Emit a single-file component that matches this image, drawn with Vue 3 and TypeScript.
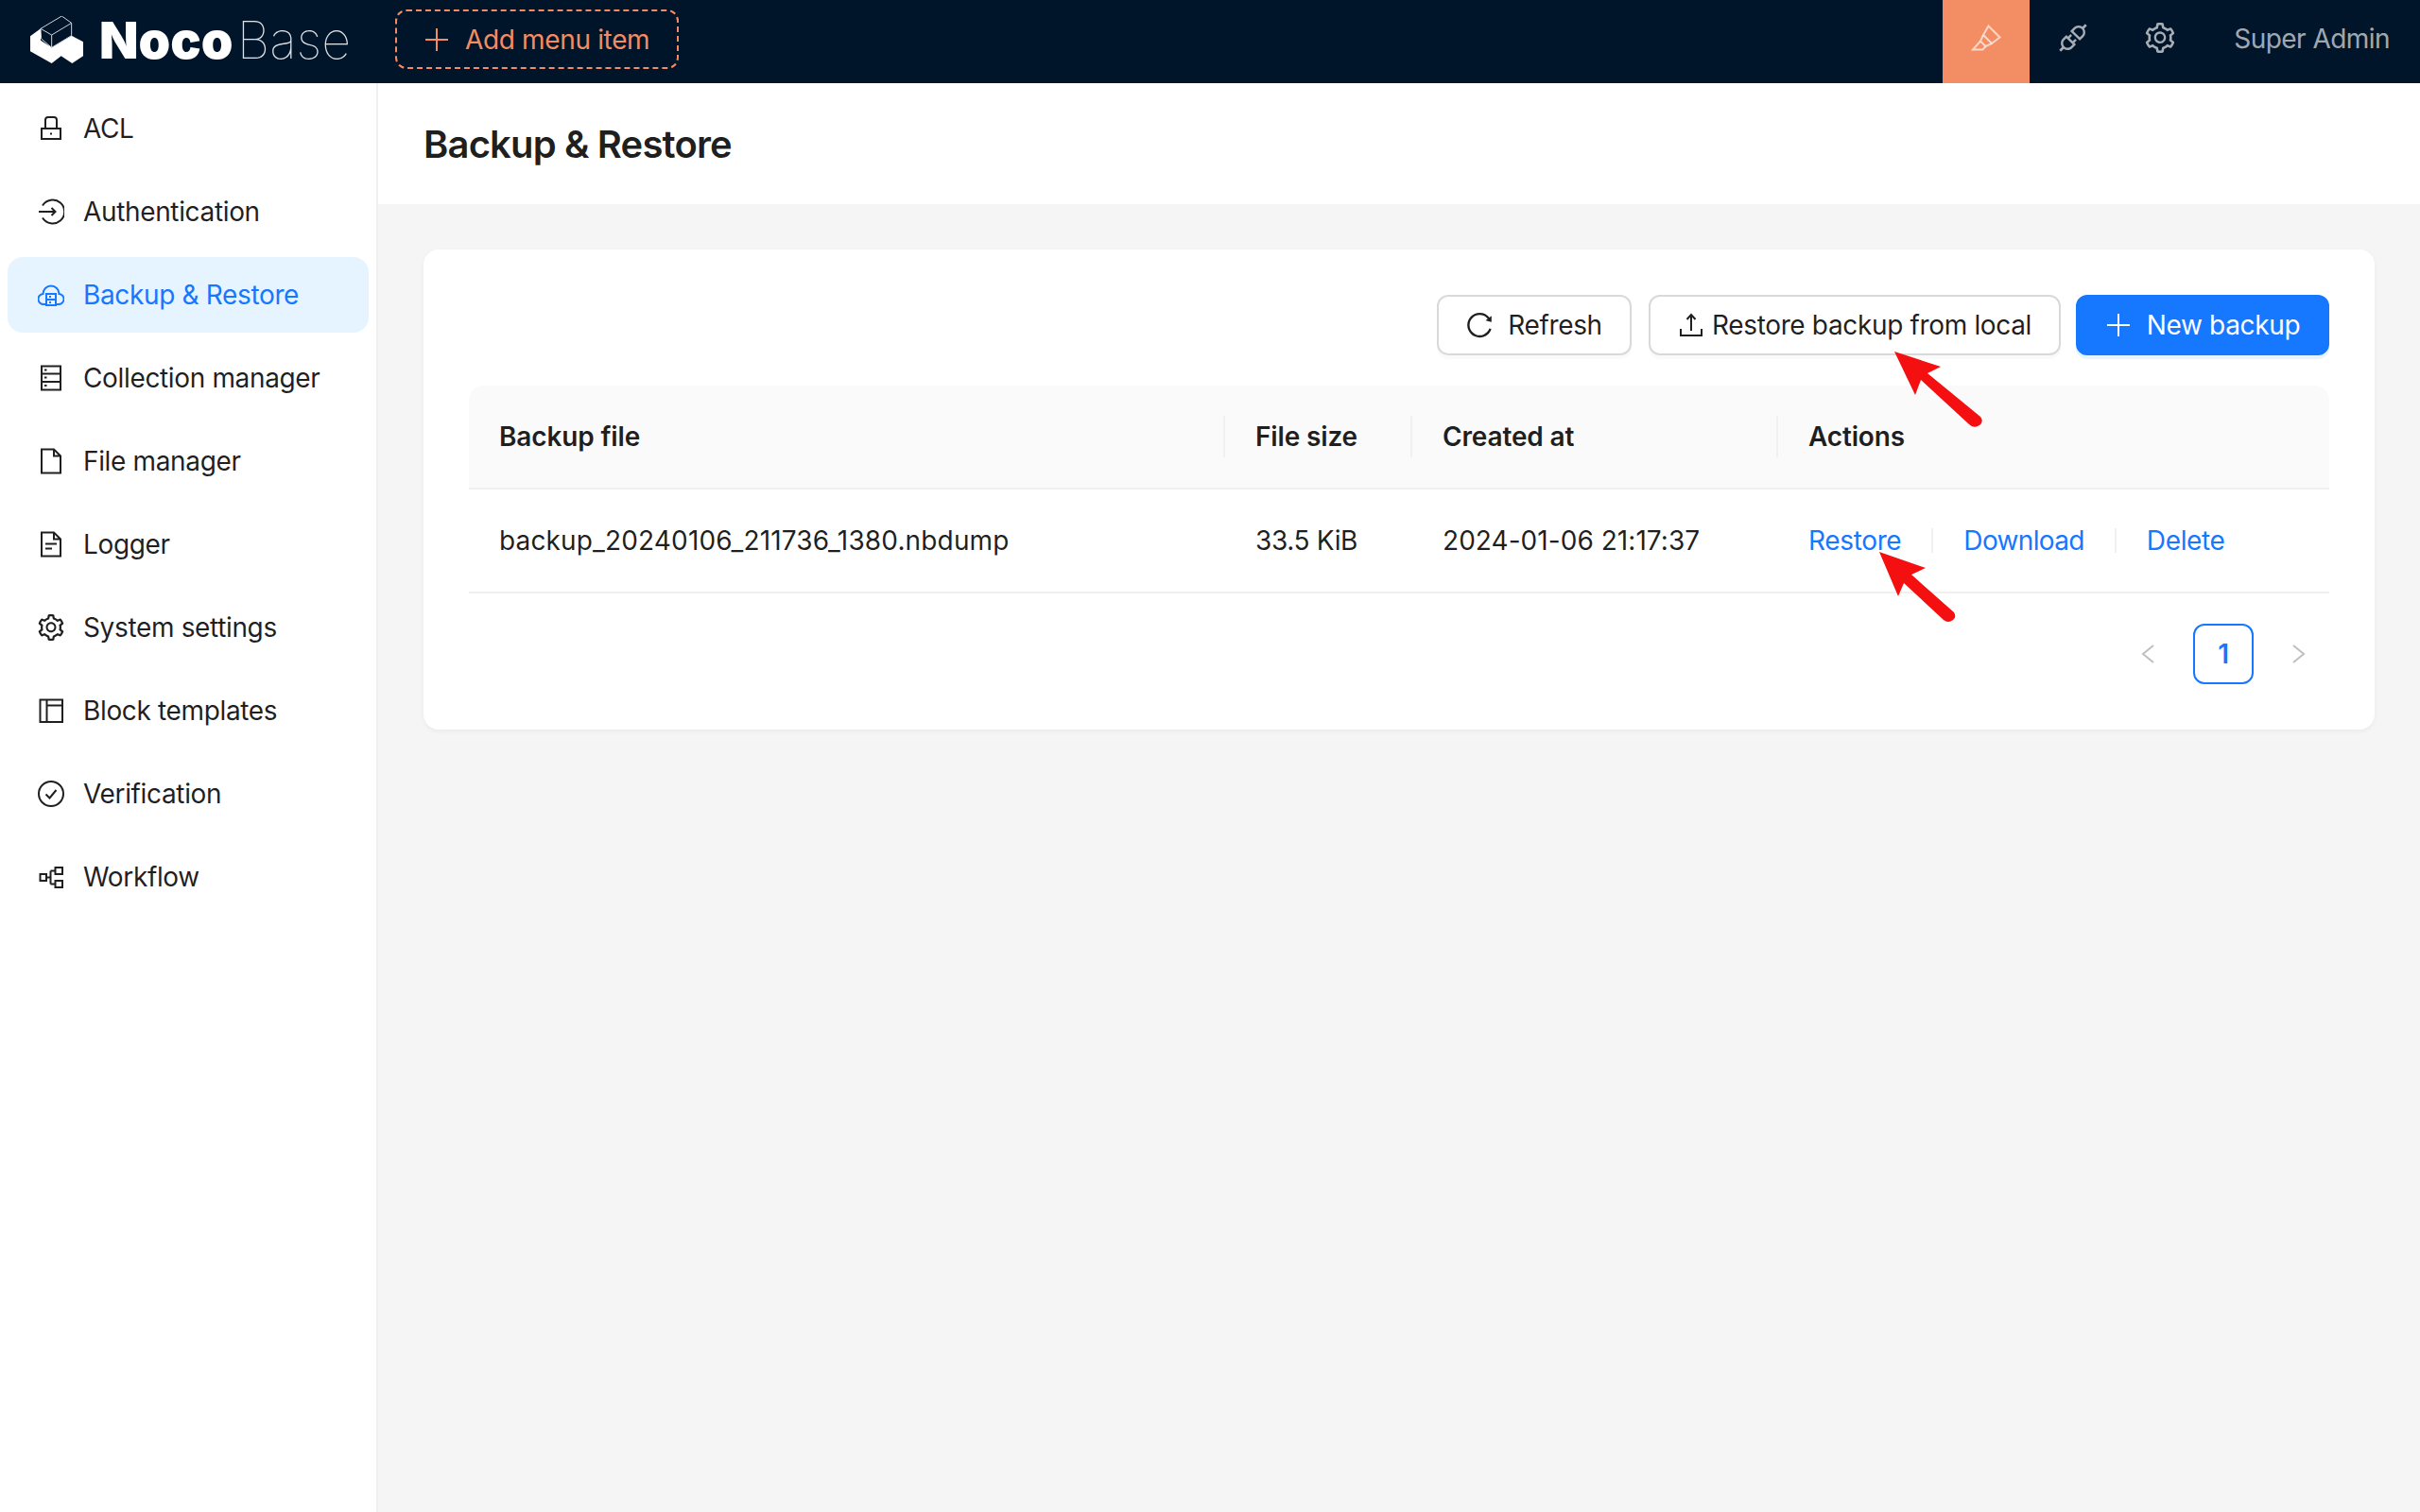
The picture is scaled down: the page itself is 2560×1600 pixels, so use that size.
<template>
  <div class="page">
    <header class="topbar">
      <div class="logo">
        <svg class="logo_mark" viewBox="37 28 168 150" width="56" height="50">
          <path d="M37 92L70 68V105L105 128L168 90L205 110V155L170 178L135 155L105 178L37 140Z" fill="#fff" />
          <path d="M70 68L137 28L168 50V90L105 128L72 100ZM70 68L105 88L168 50M105 88V128" fill="none" stroke="#cfd4da" stroke-width="3" />
        </svg>
        <span class="logo_noco">Noco</span><span class="logo_base">Base</span>
      </div>
      <button class="add_item">
        <svg class="icon" viewBox="0 0 28 28"><path d="M14 2V26M2 14H26" fill="none" stroke="currentColor" stroke-width="2" /></svg>
        <span>Add menu item</span>
      </button>
      <div class="topbar_right">
        <div class="top_icon active">
          <svg class="icon_lg" viewBox="0 0 32 32" fill="none" stroke="currentColor" stroke-width="2">
            <path d="M18.5 3.5L30.5 15.5L22 22L13 13Z" />
            <path d="M13 13L10 19.5L15.5 25L22 22" />
            <path d="M10 19.5L2 28.5H12.5L15.5 25" />
          </svg>
        </div>
        <div class="top_icon">
          <svg class="icon_lg" viewBox="64 64 896 896" fill="currentColor"><path :d="apiPath" /></svg>
        </div>
        <div class="top_icon">
          <svg class="icon_lg" viewBox="64 64 896 896" fill="currentColor"><path :d="gearPath" /></svg>
        </div>
        <div class="user">Super Admin</div>
      </div>
    </header>

    <div class="body">
      <aside class="sidebar">
        <div
          v-for="item in menuItems"
          :key="item.label"
          class="menu_item"
          :class="{ selected: item.label === activeLabel }"
        >
          <svg
            v-if="item.label === 'System settings'"
            class="icon"
            viewBox="64 64 896 896"
            fill="currentColor"
          >
            <path :d="gearPath" />
          </svg>
          <svg v-else class="icon" viewBox="0 0 28 28" fill="none" stroke="currentColor" stroke-width="2">
            <path :d="item.icon" />
          </svg>
          <span>{{ item.label }}</span>
        </div>
      </aside>

      <main class="main">
        <div class="page_head">
          <h1>Backup &amp; Restore</h1>
        </div>
        <div class="content">
          <section class="card">
            <div class="toolbar">
              <button class="btn btn_refresh">
                <svg class="icon" viewBox="64 64 896 896" fill="currentColor"><path :d="reloadPath" /></svg>
                <span>Refresh</span>
              </button>
              <button class="btn btn_upload">
                <svg class="icon" viewBox="0 0 28 28" fill="none" stroke="currentColor" stroke-width="2">
                  <path d="M14 3V20M9.5 8L14 3L18.5 8M3 18V25H25V18" />
                </svg>
                <span>Restore backup from local</span>
              </button>
              <button class="btn btn_primary">
                <svg class="icon" viewBox="0 0 28 28"><path d="M14 2V26M2 14H26" fill="none" stroke="currentColor" stroke-width="2" /></svg>
                <span>New backup</span>
              </button>
            </div>

            <table class="table">
              <colgroup>
                <col v-for="w in colWidths" :key="w" :style="{ width: w + 'px' }" />
              </colgroup>
              <thead>
                <tr>
                  <th>Backup file</th>
                  <th>File size</th>
                  <th>Created at</th>
                  <th>Actions</th>
                </tr>
              </thead>
              <tbody>
                <tr>
                  <td class="cell_name">backup_20240106_211736_1380.nbdump</td>
                  <td>33.5 KiB</td>
                  <td class="cell_date">2024-01-06 21:17:37</td>
                  <td>
                    <div class="actions">
                      <a>Restore</a>
                      <i></i>
                      <a class="tight">Download</a>
                      <i></i>
                      <a>Delete</a>
                    </div>
                  </td>
                </tr>
              </tbody>
            </table>

            <div class="pager">
              <div class="pager_item">
                <svg class="chev" viewBox="0 0 14 20"><path d="M13 1L2 10L13 19" /></svg>
              </div>
              <div class="pager_item current">1</div>
              <div class="pager_item">
                <svg class="chev" viewBox="0 0 14 20"><path d="M1 1L12 10L1 19" /></svg>
              </div>
            </div>
          </section>
        </div>
      </main>
    </div>

    <!-- annotation arrows drawn over the screenshot -->
    <svg class="arrows" viewBox="0 0 2560 1600" width="2560" height="1600">
      <path d="M2004 372L2053 388L2039 395L2095 441Q2099 446 2094 450Q2088 454 2083 449L2032 402L2026 418Z" fill="#f40f10" />
      <path d="M1988 584L2037 601L2022 608L2067 648Q2070 653 2066 656Q2061 660 2056 656L2014 617L2008 631Z" fill="#f40f10" />
    </svg>
  </div>
</template>

<script setup lang="ts">
interface MenuItem {
  label: string;
  icon: string;
}

const activeLabel = "Backup & Restore";
const colWidths = [800, 198, 387, 583];

const gearPath =
  "M924.8 625.7l-65.5-56c3.1-19 4.7-38.4 4.7-57.8s-1.6-38.8-4.7-57.8l65.5-56a32.03 32.03 0 009.3-35.2l-.9-2.6a443.74 443.74 0 00-79.7-137.9l-1.8-2.1a32.12 32.12 0 00-35.1-9.5l-81.3 28.9c-30-24.6-63.5-44-99.7-57.6l-15.7-85a32.05 32.05 0 00-25.8-25.7l-2.7-.5c-52.1-9.4-106.9-9.4-159 0l-2.7.5a32.05 32.05 0 00-25.8 25.7l-15.8 85.4a351.86 351.86 0 00-99 57.4l-81.9-29.1a32 32 0 00-35.1 9.5l-1.8 2.1a446.02 446.02 0 00-79.7 137.9l-.9 2.6c-4.5 12.5-.8 26.5 9.3 35.2l66.3 56.6c-3.1 18.8-4.6 38-4.6 57.1 0 19.2 1.5 38.4 4.6 57.1L99 625.5a32.03 32.03 0 00-9.3 35.2l.9 2.6c18.1 50.4 44.9 96.9 79.7 137.9l1.8 2.1a32.12 32.12 0 0035.1 9.5l81.9-29.1c29.8 24.5 63.1 43.9 99 57.4l15.8 85.4a32.05 32.05 0 0025.8 25.7l2.7.5a449.4 449.4 0 00159 0l2.7-.5a32.05 32.05 0 0025.8-25.7l15.7-85a350 350 0 0099.7-57.6l81.3 28.9a32 32 0 0035.1-9.5l1.8-2.1c34.8-41.1 61.6-87.5 79.7-137.9l.9-2.6c4.5-12.3.8-26.3-9.3-35zM788.3 465.9c2.5 15.1 3.8 30.6 3.8 46.1s-1.3 31-3.8 46.1l-6.6 40.1 74.7 63.9a370.03 370.03 0 01-42.6 73.6L721 702.8l-31.4 25.8c-23.9 19.6-50.5 35-79.3 45.8l-38.1 14.3-17.9 97a377.5 377.5 0 01-85 0l-17.9-97.2-37.8-14.5c-28.5-10.8-55-26.2-78.7-45.7l-31.4-25.9-93.4 33.2c-17-22.9-31.2-47.6-42.6-73.6l75.5-64.5-6.5-40c-2.4-14.9-3.7-30.3-3.7-45.5 0-15.3 1.2-30.6 3.7-45.5l6.5-40-75.5-64.5c11.3-26.1 25.6-50.7 42.6-73.6l93.4 33.2 31.4-25.9c23.7-19.5 50.2-34.9 78.7-45.7l37.9-14.3 17.9-97.2c28.1-3.2 56.8-3.2 85 0l17.9 97 38.1 14.3c28.7 10.8 55.4 26.2 79.3 45.8l31.4 25.8 92.8-32.9c17 22.9 31.2 47.6 42.6 73.6L781.8 426l6.5 39.9zM512 326c-97.2 0-176 78.8-176 176s78.8 176 176 176 176-78.8 176-176-78.8-176-176-176zm79.2 255.2A111.6 111.6 0 01512 614c-29.9 0-58-11.7-79.2-32.8A111.6 111.6 0 01400 502c0-29.9 11.7-58 32.8-79.2C454 401.6 482.1 390 512 390c29.9 0 58 11.6 79.2 32.8A111.6 111.6 0 01624 502c0 29.9-11.7 58-32.8 79.2z";

const apiPath =
  "M917.7 148.8l-42.4-42.4c-1.6-1.6-3.6-2.3-5.7-2.3s-4.1.8-5.7 2.3l-76.1 76.1a199.27 199.27 0 00-112.1-34.3c-51.2 0-102.4 19.5-141.5 58.6L432.3 308.7a8.03 8.03 0 000 11.3L704 591.7c1.6 1.6 3.6 2.3 5.7 2.3 2 0 4.1-.8 5.7-2.3l101.9-101.9c68.9-69 77-175.7 24.3-253.5l76.1-76.1c3.1-3.2 3.1-8.3 0-11.4zM769.1 441.7l-59.4 59.4-186.8-186.8 59.4-59.4c24.9-24.9 58.1-38.7 93.4-38.7 35.3 0 68.4 13.7 93.4 38.7 24.9 24.9 38.7 58.1 38.7 93.4 0 35.3-13.8 68.4-38.7 93.4zm-190.2 105a8.03 8.03 0 00-11.3 0L501 613.3 410.7 523l66.7-66.7c3.1-3.1 3.1-8.2 0-11.3L441 408.6a8.03 8.03 0 00-11.3 0L363 475.3l-43-43a7.85 7.85 0 00-5.7-2.3c-2 0-4.1.8-5.7 2.3L206.8 534.2c-68.9 69-77 175.7-24.3 253.5l-76.1 76.1a8.03 8.03 0 000 11.3l42.4 42.4c1.6 1.6 3.6 2.3 5.7 2.3s4.1-.8 5.7-2.3l76.1-76.1c33.7 22.9 72.9 34.3 112.1 34.3 51.2 0 102.4-19.5 141.5-58.6l101.9-101.9c3.1-3.1 3.1-8.2 0-11.3l-43-43 66.7-66.7c3.1-3.1 3.1-8.2 0-11.3l-36.6-36.2zM441.7 769.1a131.32 131.32 0 01-93.4 38.7c-35.3 0-68.4-13.7-93.4-38.7a131.32 131.32 0 01-38.7-93.4c0-35.3 13.7-68.4 38.7-93.4l59.4-59.4 186.8 186.8-59.4 59.4z";

const reloadPath =
  "M909.1 209.3l-56.4 44.1C775.8 155.1 656.2 92 521.9 92 290 92 102.3 279.5 102 511.5 101.7 743.7 289.8 932 521.9 932c181.3 0 335.8-115 394.6-276.1 1.5-4.2-.7-8.9-4.9-10.3l-56.7-19.5a8 8 0 00-10.1 4.8c-1.8 5-3.8 10-5.9 14.9-17.3 41-42.1 77.8-73.7 109.4A344.77 344.77 0 01655.9 829c-42.3 17.9-87.4 27-133.8 27-46.5 0-91.5-9.1-133.8-27A341.5 341.5 0 01279 755.2a342.16 342.16 0 01-73.7-109.4c-17.9-42.4-27-87.4-27-133.9s9.1-91.5 27-133.9c17.3-41 42.1-77.8 73.7-109.4 31.6-31.6 68.4-56.4 109.3-73.8 42.3-17.9 87.4-27 133.8-27 46.5 0 91.5 9.1 133.8 27a341.5 341.5 0 01109.3 73.8c9.9 9.9 19.2 20.4 27.8 31.4l-60.2 47a8 8 0 003 14.1l175.6 43c5 1.2 9.9-2.6 9.9-7.7l.8-180.9c-.1-6.6-7.8-10.3-13-6.2z";

const menuItems: MenuItem[] = [
  { label: "ACL", icon: "M4 14H24V25H4ZM8 14V5a3 3 0 0 1 3-3h6a3 3 0 0 1 3 3V14M14 18.5V20.5" },
  { label: "Authentication", icon: "M5 7.5A12.5 12.5 0 1 1 5 20.5M1 14H18.5M14.5 10L18.5 14L14.5 18" },
  { label: "Backup & Restore", icon: "M8 24H6.5A5.5 5.5 0 0 1 5.5 13A8.5 8.5 0 0 1 22.5 13A5.5 5.5 0 0 1 21.5 24H20M9 13H19V25H9ZM9 19H19M12 16H14M12 22H14" },
  { label: "Collection manager", icon: "M4 1.5H24V26.5H4ZM4 9.5H24M4 18H24M7 5.5H9.5M7 13.5H9.5M7 22H9.5" },
  { label: "File manager", icon: "M4 1.5H17L24 8.5V26.5H4ZM17 1.5V8.5H24" },
  { label: "Logger", icon: "M4 1.5H17L24 8.5V26.5H4ZM17 1.5V8.5H24M8 13.5H20M8 18.5H15" },
  { label: "System settings", icon: "" },
  { label: "Block templates", icon: "M2.5 2.5H26V26H2.5ZM9.5 2.5V26M9.5 8.5H26" },
  { label: "Verification", icon: "M27 14A13 13 0 1 1 1 14A13 13 0 1 1 27 14ZM8.5 14.5L12.5 18.5L19.5 10" },
  { label: "Workflow", icon: "M2.5 11H9V18H2.5ZM18.5 4H26V11H18.5ZM18.5 18H26V25H18.5ZM9 14.5H13.5M13.5 7.5V21.5M13.5 7.5H18.5M13.5 21.5H18.5" },
];
</script>

<style>
html,
body {
  margin: 0;
  background: #f5f5f5;
}
</style>

<style scoped>
* {
  box-sizing: border-box;
}

.page {
  position: relative;
  width: 2560px;
  height: 1600px;
  overflow: hidden;
  display: flex;
  flex-direction: column;
  font-family: Inter, "Noto Sans", sans-serif;
  font-size: 28px;
  letter-spacing: -0.35px;
  color: rgba(0, 0, 0, 0.88);
}

.topbar {
  height: 88px;
  flex: none;
  display: flex;
  align-items: center;
  background: #00152a;
}

.logo {
  width: 418px;
  height: 88px;
  display: flex;
  align-items: center;
  padding: 0 0 4px 32px;
  color: #fff;
  font-size: 54px;
  letter-spacing: 0;
}

.logo_mark {
  flex: none;
  margin-right: 17px;
}

.logo_noco {
  font-weight: 900;
  margin-right: 4px;
}

.logo_base {
  font-weight: 100;
  color: #dfe3e8;
}

.add_item {
  width: 300px;
  height: 63px;
  margin-bottom: 5px;
  display: flex;
  align-items: center;
  gap: 16px;
  padding: 0 28px;
  background: transparent;
  border: 2px dashed #f58c61;
  border-radius: 12px;
  color: #f58c61;
  font: inherit;
  letter-spacing: inherit;
  white-space: nowrap;
}

.icon {
  width: 28px;
  height: 28px;
  flex: none;
  display: block;
}

.icon_lg {
  width: 32px;
  height: 32px;
  display: block;
}

.topbar_right {
  margin-left: auto;
  display: flex;
  align-items: center;
  height: 88px;
  color: rgba(255, 255, 255, 0.65);
}

.top_icon {
  width: 92px;
  height: 88px;
  padding-bottom: 8px;
  display: flex;
  align-items: center;
  justify-content: center;
}

.top_icon.active {
  background: #f38d63;
}

.user {
  padding: 0 32px 7px;
  letter-spacing: -0.55px;
}

.body {
  flex: 1;
  display: flex;
  min-height: 0;
}

.sidebar {
  width: 400px;
  flex: none;
  background: #fff;
  border-right: 2px solid #f0f0f0;
  padding: 8px 8px 0;
}

.menu_item {
  height: 80px;
  margin-bottom: 8px;
  padding-left: 32px;
  border-radius: 16px;
  display: flex;
  align-items: center;
  gap: 20px;
  width: 382px;
}

.menu_item.selected {
  background: #e6f4ff;
  color: #1677ff;
}

.main {
  flex: 1;
  min-width: 0;
  display: flex;
  flex-direction: column;
}

.page_head {
  height: 128px;
  background: #fff;
  padding: 2px 0 0 48px;
  display: flex;
  align-items: center;
}

.page_head h1 {
  margin: 0;
  font-size: 40px;
  font-weight: 600;
  letter-spacing: -0.85px;
  line-height: 1;
}

.content {
  flex: 1;
  padding: 48px;
  background: #f5f5f5;
}

.card {
  background: #fff;
  border-radius: 16px;
  padding: 48px;
  box-shadow: 0 2px 4px rgba(0, 0, 0, 0.03), 0 2px 8px rgba(0, 0, 0, 0.02);
}

.toolbar {
  display: flex;
  justify-content: flex-end;
  gap: 16px;
  margin-bottom: 32px;
}

.btn {
  height: 64px;
  display: flex;
  align-items: center;
  justify-content: center;
  background: #fff;
  border: 2px solid #d9d9d9;
  border-radius: 12px;
  box-shadow: 0 4px 0 rgba(0, 0, 0, 0.02);
  font: inherit;
  letter-spacing: inherit;
  color: inherit;
}

.btn_refresh {
  width: 206px;
  margin-right: 2px;
  gap: 16px;
}

.btn_upload {
  width: 436px;
  gap: 8px;
}

.btn_primary {
  width: 268px;
  gap: 16px;
  background: #1677ff;
  border-color: #1677ff;
  color: #fff;
  box-shadow: 0 4px 0 rgba(5, 145, 255, 0.1);
}

.table {
  width: 1968px;
  table-layout: fixed;
  border-collapse: separate;
  border-spacing: 0;
}

.table th,
.table td {
  height: 110px;
  padding: 0 32px;
  text-align: left;
  border-bottom: 2px solid #f0f0f0;
}

.table th {
  position: relative;
  background: #fafafa;
  font-weight: 600;
  letter-spacing: -0.15px;
}

.table th:first-child {
  border-top-left-radius: 16px;
}

.table th:last-child {
  border-top-right-radius: 16px;
}

.table th:not(:last-child)::after {
  content: "";
  position: absolute;
  top: 50%;
  right: 0;
  width: 2px;
  height: 44px;
  margin-top: -22px;
  background: #f0f0f0;
}

.table .cell_name {
  letter-spacing: 0.15px;
}

.table .cell_date {
  letter-spacing: 0.05px;
}

.actions {
  display: flex;
  align-items: center;
  color: #1677ff;
}

.actions .tight {
  letter-spacing: -0.65px;
}

.actions i {
  width: 2px;
  height: 26px;
  margin: 0 32px;
  background: #f0f0f0;
}

.pager {
  display: flex;
  justify-content: flex-end;
  gap: 16px;
  margin-top: 32px;
}

.pager_item {
  width: 64px;
  height: 64px;
  display: flex;
  align-items: center;
  justify-content: center;
  border-radius: 12px;
}

.pager_item.current {
  border: 2px solid #1677ff;
  color: #1677ff;
  font-weight: 600;
}

.chev {
  width: 14px;
  height: 20px;
  fill: none;
  stroke: rgba(0, 0, 0, 0.25);
  stroke-width: 2;
}

.arrows {
  position: absolute;
  top: 0;
  left: 0;
  pointer-events: none;
}
</style>
